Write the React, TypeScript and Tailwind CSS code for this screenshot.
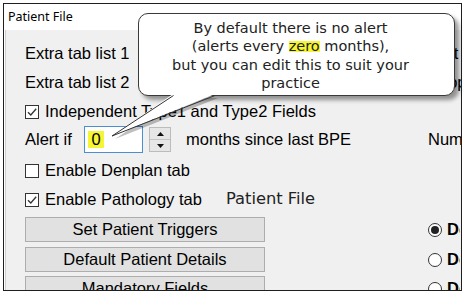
import React from "react";

function Check({ checked }: { checked: boolean }) {
  return (
    <span className="flex h-[14px] w-[14px] shrink-0 items-center justify-center border border-[#333333] bg-white">
      {checked && (
        <svg width="12" height="12" viewBox="0 0 12 12">
          <path d="M2 6.2 L4.8 9 L10.2 2.8" fill="none" stroke="#333" strokeWidth="1.3" />
        </svg>
      )}
    </span>
  );
}

function Radio({ on }: { on: boolean }) {
  return (
    <span className="flex h-[14px] w-[14px] shrink-0 items-center justify-center rounded-full border border-[#333333] bg-white">
      {on && <span className="h-[8px] w-[8px] rounded-full bg-[#222]" />}
    </span>
  );
}

function Btn({ label }: { label: string }) {
  return (
    <div className="flex h-[25px] w-[240px] shrink-0 items-center justify-center border border-[#adadad] bg-[#e1e1e1] text-[16.5px] text-black">
      {label}
    </div>
  );
}

function RadioCol({ on }: { on: boolean }) {
  return (
    <div className="ml-auto mr-[1px] flex w-[32px] items-center gap-[5px] overflow-hidden">
      <Radio on={on} />
      <span className="font-bold">Default</span>
    </div>
  );
}

export default function App() {
  return (
    <div className="relative h-[294px] w-[465px] overflow-hidden bg-white p-[3px] font-['Liberation_Sans',Arial,sans-serif]">
      <div className="flex h-[288px] w-[459px] flex-col border border-[#1f1f1f] bg-white">
        <div className="flex h-[26px] shrink-0 items-center pl-[4px] font-['Noto_Sans',sans-serif] text-[12.5px] text-black">
          Patient File
        </div>
        <div className="ml-[1px] flex min-h-0 flex-1 flex-col overflow-hidden border-l border-[#d0d0d0] bg-[#f0f0f0] pl-[19px] pt-[9px] text-[16.5px] text-black">
          <div className="flex h-[29px] shrink-0 items-center whitespace-nowrap">
            <span>Extra tab list 1</span>
            <span className="ml-auto w-[33px] overflow-hidden">Text</span>
          </div>
          <div className="flex h-[29px] shrink-0 items-center whitespace-nowrap">
            <span>Extra tab list 2</span>
            <span className="ml-auto w-[33px] overflow-hidden">Shop</span>
          </div>
          <div className="flex h-[29px] shrink-0 items-center gap-[6px] whitespace-nowrap">
            <Check checked />
            <span>Independent Type1 and Type2 Fields</span>
          </div>
          <div className="flex h-[27px] shrink-0 items-center whitespace-nowrap">
            <span className="w-[59px]">Alert if</span>
            <div className="flex h-[27px] w-[59px] items-center border border-[#4a8fd4] bg-white pl-[3px]">
              <span className="flex h-[17px] w-[16px] items-center justify-center bg-[#f5f536]">0</span>
            </div>
            <div className="ml-[6px] flex h-[25px] w-[22px] flex-col border border-[#bcbcbc] bg-[#e6e6e6]">
              <div className="flex flex-1 items-center justify-center border-b border-[#c4c4c4]">
                <svg width="7" height="4" viewBox="0 0 7 4"><path d="M0 4 L3.5 0 L7 4 Z" fill="#111" /></svg>
              </div>
              <div className="flex flex-1 items-center justify-center">
                <svg width="7" height="4" viewBox="0 0 7 4"><path d="M0 0 L3.5 4 L7 0 Z" fill="#111" /></svg>
              </div>
            </div>
            <span className="ml-[15px]">months since last BPE</span>
            <span className="ml-auto w-[33px] overflow-hidden">Number</span>
          </div>
          <div className="mt-[3px] flex h-[29px] shrink-0 items-center gap-[6px] whitespace-nowrap">
            <Check checked={false} />
            <span>Enable Denplan tab</span>
          </div>
          <div className="flex h-[29px] shrink-0 items-center whitespace-nowrap">
            <div className="flex w-[201px] items-center gap-[6px]">
              <Check checked />
              <span>Enable Pathology tab</span>
            </div>
            <span className="font-['DejaVu_Sans',sans-serif] text-[16.3px] text-[#222]">Patient File</span>
          </div>
          <div className="mt-[3px] flex shrink-0 items-center whitespace-nowrap">
            <Btn label="Set Patient Triggers" />
            <RadioCol on />
          </div>
          <div className="mt-[5px] flex shrink-0 items-center whitespace-nowrap">
            <Btn label="Default Patient Details" />
            <RadioCol on={false} />
          </div>
          <div className="mt-[4px] flex shrink-0 items-center whitespace-nowrap">
            <Btn label="Mandatory Fields" />
            <RadioCol on={false} />
          </div>
        </div>
      </div>

      {/* tail shadow */}
      <svg className="absolute left-0 top-0" width="465" height="294" viewBox="0 0 465 294">
        <polygon points="176,98 115,139 218,98" fill="rgba(0,0,0,0.25)" />
      </svg>

      {/* callout */}
      <div className="absolute left-[138px] top-[13px] h-[83px] w-[317px] rounded-[10px] border border-[#3a3a3a] bg-white pr-[12px] pt-[5px] text-center font-['DejaVu_Sans',sans-serif] text-[14.5px] leading-[18.3px] text-[#222] shadow-[4px_4px_4px_rgba(0,0,0,0.4)]">
        <div>By default there is no alert</div>
        <div>
          (alerts every{" "}
          <span className="bg-[linear-gradient(transparent_20%,#f5f536_20%,#f5f536_86%,transparent_86%)]">zero</span> months),
        </div>
        <div>but you can edit this to suit your</div>
        <div>practice</div>
      </div>

      {/* tail */}
      <svg className="absolute left-0 top-0" width="465" height="294" viewBox="0 0 465 294">
        <polygon points="173,94 112,136 215,94" fill="#fff" />
        <line x1="173.5" y1="95.5" x2="112" y2="136" stroke="#333" strokeWidth="1" />
        <line x1="215" y1="95.5" x2="112" y2="136" stroke="#333" strokeWidth="1" />
      </svg>
    </div>
  );
}
